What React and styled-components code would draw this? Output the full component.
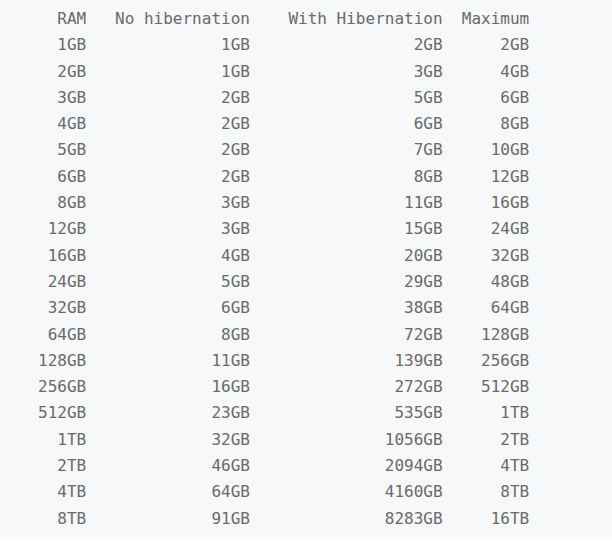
import React from "react";
import styled, { createGlobalStyle } from "styled-components";

const Global = createGlobalStyle`
  html, body { margin: 0; padding: 0; background: #ffffff; }
`;

const Block = styled.div`
  background: #f7f8fa;
  height: 537px;
  box-sizing: border-box;
  padding: 6px 0 0 38px;
  font-family: "DejaVu Sans Mono", "Liberation Mono", monospace;
  font-size: 16px;
  line-height: 26.3px;
  color: #6a6a6a;
`;

const Table = styled.div`
  display: grid;
  grid-template-columns: 5ch 17ch 20ch 9ch;
`;

const Cell = styled.div`
  text-align: right;
  white-space: pre;
`;

const header = ["RAM", "No hibernation", "With Hibernation", "Maximum"];
const rows = [
  ["1GB", "1GB", "2GB", "2GB"],
  ["2GB", "1GB", "3GB", "4GB"],
  ["3GB", "2GB", "5GB", "6GB"],
  ["4GB", "2GB", "6GB", "8GB"],
  ["5GB", "2GB", "7GB", "10GB"],
  ["6GB", "2GB", "8GB", "12GB"],
  ["8GB", "3GB", "11GB", "16GB"],
  ["12GB", "3GB", "15GB", "24GB"],
  ["16GB", "4GB", "20GB", "32GB"],
  ["24GB", "5GB", "29GB", "48GB"],
  ["32GB", "6GB", "38GB", "64GB"],
  ["64GB", "8GB", "72GB", "128GB"],
  ["128GB", "11GB", "139GB", "256GB"],
  ["256GB", "16GB", "272GB", "512GB"],
  ["512GB", "23GB", "535GB", "1TB"],
  ["1TB", "32GB", "1056GB", "2TB"],
  ["2TB", "46GB", "2094GB", "4TB"],
  ["4TB", "64GB", "4160GB", "8TB"],
  ["8TB", "91GB", "8283GB", "16TB"],
];

export default function App() {
  return (
    <>
      <Global />
      <Block>
        <Table>
          {[header, ...rows].map((r, i) =>
            r.map((c, j) => <Cell key={i + "-" + j}>{c}</Cell>)
          )}
        </Table>
      </Block>
    </>
  );
}
